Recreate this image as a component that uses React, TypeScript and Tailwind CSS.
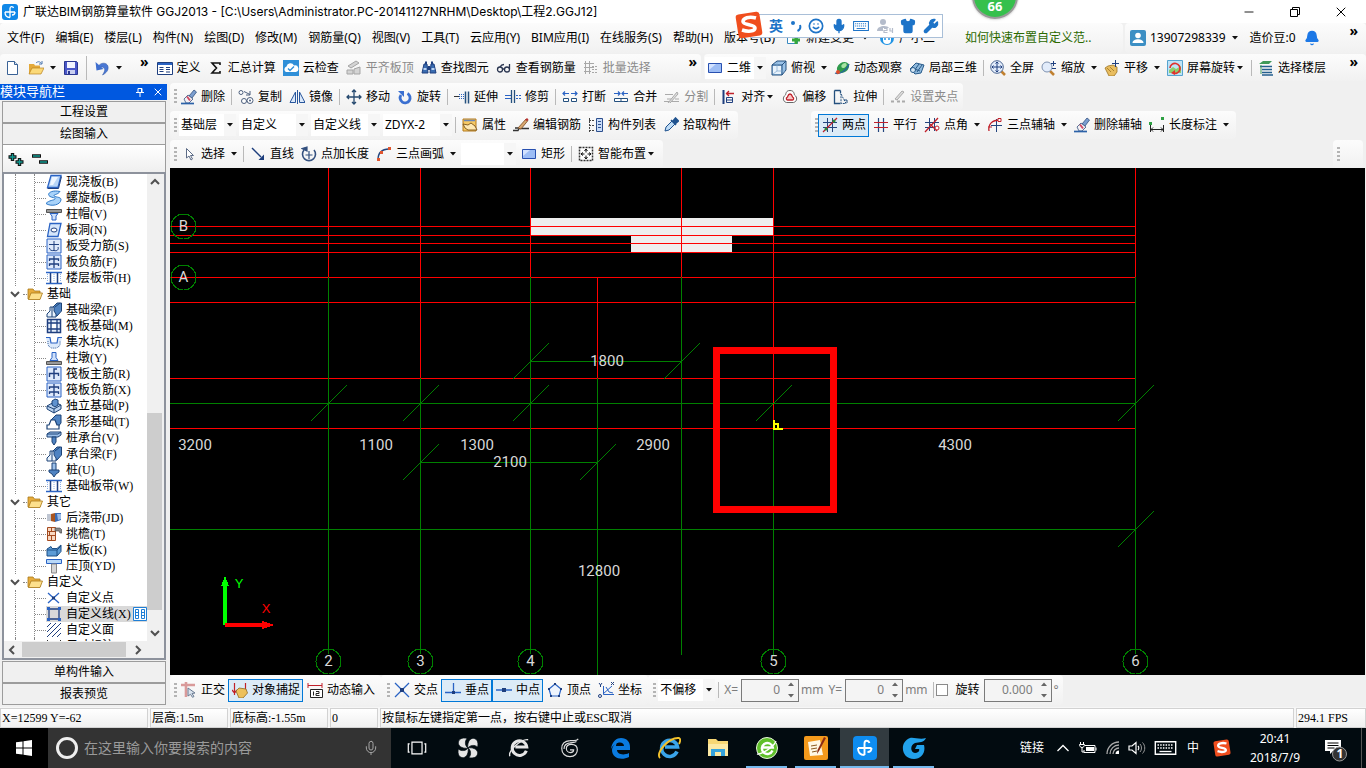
import { Fragment, useState } from 'react';
import type { ReactNode } from 'react';
import { Bell, Mic, Minus, Shirt, Smile, Wrench, X } from 'lucide-react';

const NAVY = '#1f3f7f';
const BLUE = '#2a63c4';
const RED = '#c0202a';

// 16x16 toolbar and tree glyphs
const icons: Record<string, ReactNode> = {
  app: (
    <>
      <rect width="16" height="16" rx="3" fill="#1088e8" />
      <path d="M3 8h10M8 13.500c-3.500 0-5-2-5-5.500M8 13.500V4.500c0-2.500 3-2.500 3.500-.5M13 8c0 2-1.500 3-3 3" fill="none" stroke="#fff" strokeWidth="1.300" />
    </>
  ),
  newFile: (
    <>
      <path d="M2.500 1.500h7l3 3v10h-10z" fill="#fff" stroke="#3a6296" />
      <path d="M9.500 1.500v3h3" fill="#dbe6f4" stroke="#3a6296" />
    </>
  ),
  open: (
    <>
      <path d="M1 4h5l1 1.500h5V14H1z" fill="#e3a93a" />
      <path d="M4 8h12l-3 6H1z" fill="#fbd978" stroke="#b9811c" strokeWidth=".7" />
      <path d="M8 3c2-2 4-1.500 5.500.5M14 1v3h-3" fill="none" stroke="#4a77b0" />
    </>
  ),
  save: (
    <>
      <path d="M1.500 1.500h12l1 1v12h-13z" fill="#4a57c8" stroke="#2b3790" />
      <path d="M4 2h8v6H4z" fill="#f2f4ff" />
      <path d="M4 10h8v4H4z" fill="#c9cff0" />
      <path d="M5 11h2v3H5z" fill="#2b3790" />
    </>
  ),
  undo: (
    <>
      <path d="M4 7c2-5 9-5 10-.5.7 3.500-1.500 6.500-5.500 8.500 2-3 3-5.500 1.500-7C8.500 6.500 7 7 6 8z" fill="#4a78d4" stroke="#274f9e" strokeWidth=".5" />
      <path d="M1.500 2l1 8.500 7-1.500z" fill="#3f6fcf" />
    </>
  ),
  define: (
    <>
      <path d="M.5 2.500h15v12H.5z" fill="#fff" stroke={NAVY} />
      <path d="M1 3h14v2H1z" fill={BLUE} />
      <path d="M2.500 7.500h4M2.500 9.500h4M2.500 11.500h4M9 7.500h4M9 9.500h4M9 12h4" stroke={NAVY} />
    </>
  ),
  sum: <path d="M12 5V3H4l4.500 5L4 13h8v-2" fill="none" stroke="#111" strokeWidth="1.600" />,
  cloud: (
    <>
      <rect width="16" height="16" fill="#2f8fd8" />
      <path d="M3 12a3 3 0 0 1 .5-5.500A4 4 0 0 1 11 5.500a3.300 3.300 0 0 1 2 6.500z" fill="#fff" />
      <path d="M5 8.500l2 2 4-4" fill="none" stroke="#2f8fd8" strokeWidth="1.400" />
    </>
  ),
  flatTop: (
    <g fill="#d4d4d4" stroke="#a5a5a5">
      <path d="M2 6l8-5 3 2-8 5z" />
      <path d="M1 10h6v4H1zM8 9l6-2v7H8z" />
    </g>
  ),
  binoculars: (
    <>
      <path d="M3 4h3l1 9H1zM10 4h3l2 9H9z" fill="#3a6cb0" stroke={NAVY} />
      <path d="M4 1.500h2V4H4zM10 1.500h2V4h-2zM7 6h2v4H7z" fill={NAVY} />
      <path d="M2.500 9h3M10.500 9h3" stroke="#bcd4f4" strokeWidth="2" />
    </>
  ),
  glasses: (
    <g fill="none" stroke="#2a3550" strokeWidth="1.300">
      <circle cx="4" cy="9.500" r="2.500" />
      <circle cx="11" cy="9.500" r="2.500" />
      <path d="M6.500 9h2M13.500 9V4M4 7c1-2 2-2.500 4-2.500" />
    </g>
  ),
  batch: (
    <g fill="none" stroke="#a8a8a8">
      <path d="M1 3.500h10M1 7.500h10M1 11.500h7M2.500 1v13M6.500 1v13" />
      <path d="M9 6.500h6M9 9.500h6M9 12.500h6" strokeDasharray="2 1" />
    </g>
  ),
  rect: (
    <>
      <path d="M1.500 3.500h13v9h-13z" fill="#9dbdf5" stroke="#2850b0" />
      <path d="M2 4h7l-7 6z" fill="#d3e2ff" />
    </>
  ),
  cube: (
    <>
      <path d="M1 5l5-4h9v9l-4 5H1z" fill="#9cc3e8" stroke="#24507e" />
      <path d="M1 5h10v10M11 5l4-4" fill="none" stroke="#24507e" />
      <path d="M2 6h8v8H2z" fill="#e9f3fc" />
      <path d="M6 2v9M6 11l-4 3M6 11h8" stroke="#7ea6cc" strokeWidth=".7" />
    </>
  ),
  orbit: (
    <>
      <ellipse cx="9" cy="7.500" rx="6.500" ry="5" fill="#2f9a4c" transform="rotate(-35 9 7.500)" />
      <ellipse cx="10" cy="5.500" rx="3" ry="2" fill="#a8e4a4" transform="rotate(-35 10 5.500)" />
      <path d="M1 13c5 2 12-3 14-9" fill="none" stroke="#26639c" strokeWidth="1.300" />
      <circle cx="4" cy="12" r="2" fill="#e04b2a" />
    </>
  ),
  local3d: (
    <>
      <path d="M1 9l6-6 8 2-3 8-6 1z" fill="#8fb9dc" stroke="#275a8a" />
      <path d="M5 11l5-7M8 12l5-7M3 8l8 3" stroke="#275a8a" />
      <circle cx="4" cy="10" r="2.500" fill="#d6e8f6" stroke="#275a8a" />
    </>
  ),
  fullScreen: (
    <>
      <path d="M11 11l4 4" stroke="#c08030" strokeWidth="2.500" />
      <circle cx="7" cy="7" r="6.300" fill="#e2ecfb" stroke="#4b6590" />
      <path d="M7 2v10M2 7h10M5.500 3.500L7 2l1.500 1.500M5.500 10.500L7 12l1.500-1.500M3.500 5.500L2 7l1.500 1.500M10.500 5.500L12 7l-1.500 1.500" fill="none" stroke={NAVY} />
    </>
  ),
  zoom: (
    <>
      <path d="M9 11l4 4" stroke="#c08030" strokeWidth="2.500" />
      <circle cx="6" cy="7" r="5" fill="#e2ecfb" stroke="#7f92b0" />
      <path d="M12.500 1v5M10 3.500h5M11 8.500h4" stroke={NAVY} />
    </>
  ),
  pan: (
    <>
      <path d="M1 8l3-2 5-1 4 2v5l-3 4H5z" fill="#e9bd5f" stroke="#9c7424" strokeWidth=".8" />
      <path d="M3 8l4 4M6 7l4 4" stroke="#9c7424" strokeWidth=".8" />
      <path d="M11.500 0v7M8 3.500h7" stroke={NAVY} />
    </>
  ),
  rotateView: (
    <>
      <path d="M.5.5h15v15H.5z" fill="#bfe3f7" stroke="#56a3cf" />
      <path d="M2 10l4-3 3 2 5-3v7H2z" fill="#8ccf6c" />
      <path d="M3 8a5 5 0 1 1 3 5" fill="none" stroke="#e0322e" strokeWidth="1.700" />
      <path d="M8 10v5l-4-2z" fill="#e0322e" />
    </>
  ),
  floors: (
    <>
      <path d="M1 4l4-3h9l-3 3z" fill="#3f9a58" />
      <path d="M2 6.500h12M4 9.500h10M4 12.500h10M4 15h11" stroke="#245f8e" strokeWidth="1.500" />
      <path d="M3 5v9" stroke="#3f9a58" />
    </>
  ),
  erase: (
    <>
      <path d="M8 7l5-6 2.500 2L11 9z" fill="#7b9ed0" stroke="#33507f" strokeWidth=".8" />
      <path d="M3 10l4-4 5 4-4 4H5z" fill="#f4f1f4" stroke="#33507f" strokeWidth=".8" />
      <path d="M6 7.500l3 4" stroke="#d04a62" strokeWidth="1.800" />
      <path d="M0 14.500h13" stroke="#2c62a8" strokeWidth="1.700" />
    </>
  ),
  copy: (
    <>
      <g fill="#fff" stroke="#4c5f7d">
        <circle cx="3" cy="3.500" r="2" />
        <circle cx="6" cy="12" r="2.500" />
        <circle cx="12" cy="11.500" r="3" />
      </g>
      <path d="M6 2.500l6 3M12 2v4H8" fill="none" stroke="#4c5f7d" />
      <circle cx="12" cy="11.500" r="1" fill="#4c5f7d" />
    </>
  ),
  mirror: <path d="M6.500 3v10.500H1zM8.500 1v14M10.500 3v10.500H16z" fill="#dce9fa" stroke="#28569c" />,
  move: <path d="M8 1v14M1 8h14M6 3l2-2 2 2M6 13l2 2 2-2M3 6L1 8l2 2M13 6l2 2-2 2" fill="none" stroke="#26496f" strokeWidth="1.300" />,
  rotate: (
    <>
      <path d="M4 6a5 5 0 1 0 6.500-1.500" fill="none" stroke="#3a6fd0" strokeWidth="2.800" />
      <path d="M1 2h6v6z" fill="#3a6fd0" />
    </>
  ),
  extend: (
    <>
      <path d="M0 7.500h5" stroke="#333" />
      <path d="M5 7.500h6M5 9.500h6M5 5.500h6" stroke={BLUE} strokeDasharray="1 1" />
      <path d="M11.500 2.500v12M14.500 2.500v12" stroke="#24507e" strokeWidth="1.500" />
    </>
  ),
  trim: (
    <>
      <path d="M0 6.500h6M0 9.500h6" stroke={BLUE} />
      <path d="M6.500 1v13M9.500 1v13" stroke="#24507e" strokeWidth="1.300" />
      <path d="M11 6.500h5M11 9.500h5" stroke={BLUE} strokeDasharray="2 1" />
    </>
  ),
  breakLine: (
    <>
      <path d="M1 4.500h6M9 4.500h6M3 2.500l-2 2 2 2M13 2.500l2 2-2 2" fill="none" stroke={BLUE} strokeWidth="1.200" />
      <path d="M1.500 9.500h5v3h-5zM9.500 9.500h5v3h-5z" fill="#fff" stroke="#24507e" />
    </>
  ),
  merge: (
    <>
      <path d="M1 4.500h6M9 4.500h6M5 2.500l2 2-2 2M11 2.500l-2 2 2 2" fill="none" stroke={BLUE} strokeWidth="1.200" />
      <path d="M1.500 9.500h13v3h-13zM8 9.500v3" fill="#fff" stroke="#24507e" />
    </>
  ),
  split: (
    <g fill="none" stroke="#aaa">
      <path d="M1 5.500h8M0 12.500h15M3 10h5M11 10h4" />
      <path d="M4 14L13 3l1 2-8 9" fill="#ddd" />
    </g>
  ),
  align: (
    <>
      <path d="M2.500 1v14" stroke={NAVY} strokeWidth="2" />
      <path d="M5.500 8.500h6v5h-6zM5 11h7" fill="none" stroke={NAVY} />
      <path d="M5 4.500h8M8 2L5.500 4.500 8 7" fill="none" stroke={RED} strokeWidth="1.300" />
    </>
  ),
  offset: (
    <>
      <path d="M8 1.500c4 0 4 3 4.500 4.500 3 2 3 6.500-1 7.500h-7c-4-1-4-5.500-1-7.500C4 4.500 4 1.500 8 1.500z" fill="#fff" stroke="#666" />
      <path d="M8 5c2 0 2 2 2.500 3 2 1 1 3 0 3h-5c-1 0-2-2 0-3C6 7 6 5 8 5z" fill="#f7c8c8" stroke={RED} strokeWidth="1.300" />
    </>
  ),
  stretch: (
    <>
      <path d="M1.500 1.500h6M1.500 1.500v13h6M7.500 1.500v3" fill="none" stroke="#24507e" strokeWidth="1.300" />
      <path d="M8 5l5 9.500H8z" fill="none" stroke="#24507e" strokeDasharray="2 1" />
      <path d="M11 11h3v3" fill="none" stroke="#24507e" />
    </>
  ),
  grip: (
    <g stroke="#aaa" fill="none">
      <path d="M1 12.500h3M7 12.500h3M12 12.500h3" strokeWidth="2" />
      <path d="M5 10l7-8 2 1-7 8z" fill="#ddd" />
    </g>
  ),
  property: (
    <>
      <path d="M1 2h13v12H1z" fill="#f7c964" stroke="#b47a1f" />
      <path d="M2 3.500h11" stroke="#6b87b7" strokeWidth="1.500" />
      <path d="M1 7l5 1 3-2 4 3 2 4H6L3 11z" fill="#ffe9b4" stroke="#7c5418" strokeWidth=".9" />
    </>
  ),
  editBar: (
    <>
      <path d="M0 13.500h5l1-2h10M2 11h3" stroke="#333" fill="none" strokeWidth="1.400" />
      <path d="M5 11l8-9 2 1.500L8 12z" fill="#d8a870" stroke="#7b4a20" strokeWidth=".8" />
      <path d="M12 3l2-2 1.500 1.500L14 4z" fill="#b83030" />
    </>
  ),
  list: (
    <>
      <path d="M1 3.500h5M1 8.500h5M1 13.500h5M1.500 1v14" stroke="#444" strokeDasharray="2 1" />
      <path d="M8.500 1.500h6v13h-6z" fill="#c9dcf8" stroke="#2c4f8d" />
      <path d="M10 4.500h3M10 7.500h3M10 10.500h3" stroke="#2c4f8d" />
    </>
  ),
  picker: (
    <>
      <path d="M2 14l1-4 6-6 3 3-6 6z" fill="#bfdcf6" stroke="#20538f" />
      <path d="M8 3l5 5M10 4l2.500-3 3 3L13 6z" fill="#20538f" stroke="#20538f" strokeWidth="1.500" />
    </>
  ),
  twoPoint: (
    <>
      <path d="M5.500 1v14M10.500 1v14M1 5.500h14M1 10.500h14" stroke="#24457e" />
      <path d="M1 15L15 1" stroke={RED} strokeWidth="1.300" />
      <circle cx="4" cy="12" r="1.500" fill="#2d8c3a" />
      <circle cx="12" cy="4" r="1.500" fill="#2d8c3a" />
    </>
  ),
  parallel: (
    <>
      <path d="M5.500 1v14M10.500 1v14" stroke="#24457e" strokeWidth="1.200" />
      <path d="M1 5.500h14M1 10.500h14" stroke={RED} strokeWidth="1.200" />
    </>
  ),
  pointAngle: (
    <>
      <path d="M5.500 1v13M10.500 1v13M1 5.500h14M1 10.500h10" stroke="#24457e" />
      <path d="M1 15L14 1M6 7l7 7" stroke={RED} strokeWidth="1.300" />
      <circle cx="13" cy="11" r="2" fill="#fff" stroke={RED} />
    </>
  ),
  arcAxis: (
    <>
      <path d="M9.500 2v13M4 8.500h11" stroke="#24457e" />
      <path d="M2 14C1 7 5 3 13 3" fill="none" stroke={RED} strokeWidth="1.300" />
      <path d="M1 10h4M11 1.500h3v3h-3z" stroke={RED} fill="#fff" />
    </>
  ),
  dimension: (
    <>
      <path d="M1.500 8v7M14.500 8v7M1.500 12.500h13M4 10.500l-2 2 2 2M12 10.500l2 2-2 2" fill="none" stroke="#222" />
      <path d="M0 5h3v3H0zM12 0h3v3h-3z" fill="#2ea043" />
    </>
  ),
  cursor: <path d="M5.500 2.500v9.500l2.500-2 2 4 1.500-1-2-3.500h3z" fill="#fff" stroke="#5c6b86" />,
  line: (
    <>
      <path d="M2 2l9 9" stroke="#1c3d7c" strokeWidth="1.400" />
      <path d="M14 14H8.500L14 8.500z" fill="#1c3d7c" />
    </>
  ),
  addLength: (
    <>
      <path d="M3 4a6.500 6.500 0 1 0 10 0" fill="none" stroke="#33507f" strokeWidth="1.600" />
      <path d="M1 2.500l5-1.500v4zM8 5v8M4.500 9h7" stroke="#33507f" strokeWidth="1.200" fill="#33507f" />
    </>
  ),
  arc: (
    <>
      <path d="M2 14C2 7 6 3 13 3" fill="none" stroke="#24457e" strokeWidth="1.400" />
      <path d="M1 12h3v3H1zM4 5h3v3H4zM12 1h3v3h-3z" fill="#e0562f" />
    </>
  ),
  smart: (
    <>
      <path d="M1.500 1.500h13v13h-13z" fill="#fff" stroke="#333" strokeDasharray="2 1" strokeWidth="1.500" />
      <path d="M8 3v3.500M8 9.500V13M3 8h3.500M9.500 8H13M6.500 5L8 3l1.500 2M6.500 11L8 13l1.500-2M5 6.500L3 8l2 1.500M11 6.500L13 8l-2 1.500" fill="none" stroke="#111" />
    </>
  ),
  ortho: (
    <>
      <path d="M0 3h14M5 0v15" stroke="#d99a9a" strokeWidth="2.600" />
      <path d="M7 6l7 5-3 .5 2 3-1.500.8-2-3L7 14z" fill="#dbe4ee" stroke="#6a7b93" />
    </>
  ),
  snap: (
    <>
      <path d="M2.500 1v12M0 8l2.500 3L5 8M13.500 1v8" stroke={RED} strokeWidth="1.200" fill="none" />
      <path d="M4 9l3-3 7 1 1.500 4-4.500 5H7z" fill="#edc15c" stroke="#8f6b22" strokeWidth=".8" />
    </>
  ),
  dynInput: (
    <>
      <path d="M1 1v5M15 1v5M1 3.500h14" stroke={RED} />
      <path d="M3.500 7.500h12v8h-12z" fill="#fff" stroke="#222" />
      <path d="M6.500 9.500v4M9 9.500h3v2H9v2h3.500" stroke="#222" fill="none" />
    </>
  ),
  cross: (
    <>
      <path d="M1 1l14 14M15 1L1 15" stroke={BLUE} strokeWidth="1.300" />
      <path d="M6 6h4v4H6z" fill={NAVY} />
    </>
  ),
  perp: (
    <>
      <path d="M0 10.500h16M8.500 1v10" stroke={BLUE} strokeWidth="1.300" />
      <path d="M7 9h3v3H7z" fill={NAVY} />
    </>
  ),
  middle: (
    <>
      <path d="M0 8h16" stroke={BLUE} strokeWidth="1.500" />
      <path d="M6 6h4v4H6z" fill={NAVY} />
    </>
  ),
  vertex: (
    <>
      <path d="M8 2l6 5-2 7H4L2 7z" fill="#eef4fd" stroke={BLUE} strokeWidth="1.200" />
      <path d="M7 1h2v2H7zM1 6h2v2H1zM13 6h2v2h-2zM3 13h2v2H3zM11 13h2v2h-2z" fill={NAVY} />
    </>
  ),
  coord: (
    <g fill="none" stroke={BLUE}>
      <path d="M5.500 4v8.500H16M5 12L14 4M8 5l3 5 4 1" />
      <path d="M1 1l1.500 2L4 1M2.500 3v2M13 0l3 3M16 0l-3 3" stroke={NAVY} />
      <circle cx="2" cy="14" r="1.500" stroke={NAVY} />
    </g>
  ),
  folder: (
    <>
      <path d="M1 3h5l1.500 2H13v8H1z" fill="#e7ac3c" stroke="#a97a1a" strokeWidth=".8" />
      <path d="M4 7h11.500L13 13.500H1.500z" fill="#fde08c" stroke="#a97a1a" strokeWidth=".8" />
    </>
  ),
  slab: (
    <>
      <path d="M5 1.500h10l-3 12H1.500z" fill="#b8d5f7" stroke={BLUE} strokeWidth="1.300" />
      <path d="M6 3h6L7 11H4z" fill="#eef6ff" />
      <path d="M1.500 14.500h11l3-12" fill="none" stroke={NAVY} />
    </>
  ),
  spiral: <path d="M14 1.500C5-.5 0 4 4 6.500c3 1.500 6 1 5 2.500s-6 1-9 4.500c5 3.500 15 1.500 15-4 0-3-7-2-7-4 0-1 4-1 6-4z" fill="#a8d3fa" stroke="#2e79c8" />,
  capital: (
    <>
      <path d="M.5 3.500h15v3H.5z" fill="#999" stroke="#555" />
      <path d="M4 7.500h8l-2 2.500v4H6v-4z" fill="#cfe0fa" stroke={BLUE} />
    </>
  ),
  hole: (
    <>
      <path d="M4 1.500h11l-3 13H1.500z" fill="#d5e6fb" stroke={BLUE} strokeWidth="1.300" />
      <ellipse cx="8" cy="8" rx="3" ry="2" fill="#fff" stroke={NAVY} />
    </>
  ),
  stressBar: (
    <>
      <path d="M1 1h14v14H1z" fill="#dfeafc" stroke={BLUE} />
      <path d="M3 6.500h10M8 3v9.500c3 1 5-1 4-3.500M3.500 10c0 2 2 3 4.500 2.500" fill="none" stroke={NAVY} />
    </>
  ),
  negBar: (
    <>
      <path d="M1 1h14v14H1z" fill="#dfeafc" stroke={BLUE} />
      <path d="M8 2v12M3.500 7V5h9v2M3.500 12v-2h9v2" fill="none" stroke={NAVY} strokeWidth="1.300" />
    </>
  ),
  band: (
    <>
      <path d="M0 2.500h16M0 13.500h16" stroke={BLUE} strokeWidth="1.600" />
      <path d="M4.500 3v10M11.500 3v10" stroke={NAVY} strokeWidth="1.500" />
      <path d="M1.500 4v8M8 4v8M14.500 4v8" stroke="#8fb2e8" strokeDasharray="1 1" />
    </>
  ),
  beam: (
    <>
      <path d="M6 6l5-5h4.500v8L11 14H6z" fill="#4f83c2" stroke="#1d4376" />
      <path d="M1 15v-3l3-3V5h4v4l2 3v3z" fill="#e8f2fd" stroke="#1d4376" />
      <path d="M6 5v10M9 5l5-4" stroke="#1d4376" />
    </>
  ),
  raft: (
    <>
      <path d="M1.500 1.500h13v13h-13z" fill="#e5effc" stroke={NAVY} strokeWidth="1.500" />
      <path d="M5 1v14M11 1v14M1 5h14M1 11h14" stroke={NAVY} strokeWidth="1.300" />
      <path d="M6 6h4v4H6z" fill="#fff" />
    </>
  ),
  sump: (
    <>
      <path d="M0 3h4l1 6h6l1-6h4l-2 10-6 2-6-2z" fill="#dbe9fb" stroke="none" />
      <path d="M0 3.500h4l1 5.500h6l1-5.500h4" fill="none" stroke={BLUE} strokeWidth="1.200" />
      <path d="M2 7v4l3 3h6l3-3V7" fill="none" stroke="#47689c" strokeDasharray="1 1" />
    </>
  ),
  pier: (
    <>
      <path d="M.5 11.500h15v3H.5z" fill="#999" stroke="#555" />
      <path d="M4 10.500h8l-2-3v-5H6v5z" fill="#cfe0fa" stroke={BLUE} />
    </>
  ),
  mainBar: (
    <>
      <path d="M1 1h14v14H1z" fill="#dfeafc" stroke={BLUE} />
      <path d="M8 13V3h3M3.500 11V7.500h9V10" fill="none" stroke={NAVY} strokeWidth="1.400" />
    </>
  ),
  footing: (
    <>
      <path d="M1 8l7-4 7 3v4l-7 4-7-4z" fill="#b9d2f0" stroke="#1d4376" />
      <path d="M1 8l7 3 7-4M8 11v4" fill="none" stroke="#1d4376" />
      <path d="M6 3l3-2 3 1v5L9 9 6 7z" fill="#5f92cf" stroke="#1d4376" />
    </>
  ),
  strip: (
    <>
      <path d="M5 6l5-5h5v8l-4 5" fill="#4f83c2" stroke="#1d4376" />
      <path d="M1 15v-4h2l2-5h4l2 5h2v4z" fill="#fff" stroke="#1d4376" strokeWidth="1.200" />
    </>
  ),
  pileCap: (
    <>
      <path d="M1 4l3-2h11v3l-3 2H1z" fill="#9cc0ea" stroke="#1d4376" />
      <path d="M1 4h11l3-2" fill="none" stroke="#1d4376" />
      <path d="M6 7h4v5l-2 3-2-3z" fill="#4f83c2" stroke="#1d4376" />
    </>
  ),
  pile: (
    <>
      <path d="M6 1h4v8H6z" fill="#9cc0ea" stroke="#1d4376" />
      <path d="M3 8h10v2l-3 2-2 3-2-3-3-2z" fill="#4f83c2" stroke="#1d4376" />
    </>
  ),
  postCast: (
    <>
      <path d="M1 4h5v7H1z" fill="#bfc6d2" />
      <path d="M5 4l4-1v9l-4-1z" fill="#a9551f" />
      <path d="M9 3h6v7l-6 2z" fill="#3a6bb4" />
      <path d="M11 4h4v5l-3 1z" fill="#9bbce8" />
    </>
  ),
  eave: (
    <>
      <path d="M1.500 1.500h8v13h-8z" fill="#f9d9c2" stroke="#a44b20" />
      <path d="M1 5.500h8M1 9.500h8M5.500 1v4M3.500 5v4M5.500 10v5" stroke="#a44b20" />
      <path d="M9 2h5l2 2v3h-2l-1-2H9z" fill="#888" stroke="#444" strokeWidth=".6" />
    </>
  ),
  railing: (
    <>
      <path d="M1 7l4-2.500 1 2h5l4-3.500v6.500L11 14H1z" fill="#5d9cd6" stroke="#1d4f86" />
      <path d="M1 8h10v6M11 8l4-4" fill="none" stroke="#1d4f86" />
    </>
  ),
  coping: (
    <>
      <path d="M.5 1.500h15v4H.5z" fill="#b8d8f8" stroke={BLUE} />
      <path d="M5.500 6h5v9h-5z" fill="#d6d6d6" stroke="#888" />
    </>
  ),
  customPoint: (
    <>
      <path d="M2 3l11 10M13 3L2 13" stroke={BLUE} strokeWidth="1.300" />
      <path d="M6 6.500h3v3H6z" fill={NAVY} />
    </>
  ),
  customLine: (
    <>
      <path d="M3 3h10v10H3z" fill="none" stroke={NAVY} strokeWidth="1.300" />
      <path d="M1 1h3v3H1zM12 1h3v3h-3zM1 12h3v3H1zM12 12h3v3h-3z" fill={BLUE} />
    </>
  ),
  customFace: <path d="M1 5l4-4M1 10l9-9M1 15L15 1M6 15l9-9M11 15l4-4" stroke={NAVY} />,
  dimTree: <path d="M1.500 2v12M14.500 2v12M1 4.500h14" stroke="#333" />,
};

function Icon({ name }: { name: string }) {
  return (
    <svg viewBox="0 0 16 16" className="w-4 h-4 shrink-0" aria-hidden="true">
      {icons[name]}
    </svg>
  );
}

function Caret() {
  return (
    <svg viewBox="0 0 6 4" className="w-1.5 h-1 shrink-0" aria-hidden="true">
      <path d="M0 0h6L3 3.500z" fill="#111" />
    </svg>
  );
}

function Sep() {
  return <span className="w-px h-4 ml-[3px] mr-0.5 bg-[#b9b9b9] shrink-0" />;
}

function Grip() {
  return <span className="w-[3px] h-[15px] ml-1 shrink-0 bg-[repeating-linear-gradient(#b4b4b4_0_2px,transparent_2px_4px)]" />;
}

function More() {
  return <span className="text-sm leading-3 font-bold self-start mt-0.5">»</span>;
}

type ToolProps = { icon: string; label: string; menu?: 'near' | 'far'; active?: boolean; disabled?: boolean };

function Tool({ icon, label, menu, active, disabled }: ToolProps) {
  return (
    <button
      type="button"
      disabled={disabled}
      className={`flex items-center gap-1 h-[23px] pl-[3px] pr-0.5 border shrink-0 whitespace-nowrap ${
        active ? 'border-[#0078d7] bg-[#dcebf7]' : 'border-transparent'
      } ${disabled ? 'text-[#8b8b8b]' : ''}`}
    >
      <Icon name={icon} />
      {label}
      {menu && (
        <span className={menu === 'far' ? 'pl-0.5' : '-ml-0.5 pr-0.5'}>
          <Caret />
        </span>
      )}
    </button>
  );
}

function Combo({ label, value, className }: { label: string; value: string; className: string }) {
  return (
    <label className={`relative flex items-center h-[22px] bg-white shrink-0 ${className}`}>
      <select aria-label={label} className="appearance-none w-full h-full pl-0.5 outline-none bg-transparent">
        <option>{value}</option>
      </select>
      <span className="absolute right-0 inset-y-0 w-3 flex items-center justify-center bg-[#f6f6f6] pointer-events-none">
        <Caret />
      </span>
    </label>
  );
}

function Bar({ children, className = '' }: { children?: ReactNode; className?: string }) {
  return (
    <div className={`flex items-center h-full rounded bg-linear-to-b from-[#fcfcfc] to-[#f1f1f1] shrink-0 ${className}`}>{children}</div>
  );
}

function Spin({ id, value, className }: { id: string; value: string; className: string }) {
  return (
    <span className={`flex items-center h-[23px] border border-[#7a7a7a] bg-[#f4f4f4] text-[#7d7d7d] shrink-0 ${className}`}>
      <input id={id} defaultValue={value} className="w-full min-w-0 text-right outline-none bg-transparent pr-2" />
      <svg viewBox="0 0 6 16" className="w-1.5 h-4 mr-1 shrink-0" aria-hidden="true">
        <path d="M0 4l3-3.500L6 4zM0 12h6l-3 3.500z" fill="#666" />
      </svg>
    </span>
  );
}

const menus = [
  '文件(F)', '编辑(E)', '楼层(L)', '构件(N)', '绘图(D)', '修改(M)', '钢筋量(Q)', '视图(V)', '工具(T)',
  '云应用(Y)', 'BIM应用(I)', '在线服务(S)', '帮助(H)', '版本号(B)',
];

const tree = [
  {
    name: '',
    items: [
      ['slab', '现浇板(B)'], ['spiral', '螺旋板(B)'], ['capital', '柱帽(V)'], ['hole', '板洞(N)'],
      ['stressBar', '板受力筋(S)'], ['negBar', '板负筋(F)'], ['band', '楼层板带(H)'],
    ],
  },
  {
    name: '基础',
    items: [
      ['beam', '基础梁(F)'], ['raft', '筏板基础(M)'], ['sump', '集水坑(K)'], ['pier', '柱墩(Y)'],
      ['mainBar', '筏板主筋(R)'], ['negBar', '筏板负筋(X)'], ['footing', '独立基础(P)'], ['strip', '条形基础(T)'],
      ['pileCap', '桩承台(V)'], ['beam', '承台梁(F)'], ['pile', '桩(U)'], ['band', '基础板带(W)'],
    ],
  },
  {
    name: '其它',
    items: [['postCast', '后浇带(JD)'], ['eave', '挑檐(T)'], ['railing', '栏板(K)'], ['coping', '压顶(YD)']],
  },
  {
    name: '自定义',
    items: [['customPoint', '自定义点'], ['customLine', '自定义线(X)'], ['customFace', '自定义面'], ['dimTree', '尺寸标注(W)']],
  },
];

function Chevron({ d }: { d: string }) {
  return (
    <svg viewBox="0 0 16 16" className="w-4 h-4 shrink-0" aria-hidden="true">
      <path d={d} fill="none" stroke="#505050" strokeWidth="2" />
    </svg>
  );
}

function TreeView() {
  const [selected, setSelected] = useState('自定义线(X)');

  return (
    <div className="flex-1 min-h-0 ml-0.5 mr-1 border-2 border-[#8d929c] bg-[#f0f0f0] flex flex-col">
      <div className="flex flex-1 min-h-0">
        <ul className="flex-1 min-w-0 overflow-hidden bg-white">
          {tree.map((group) => (
            <Fragment key={group.name}>
              {group.name && (
                <li className="flex items-center h-4 pl-[3px]">
                  <Chevron d="M4 6l4 4 4-4" />
                  <span className="w-1 border-t border-dotted border-[#888]" />
                  <Icon name="folder" />
                  <span className="pl-1">{group.name}</span>
                </li>
              )}
              {group.items.map(([icon, label]) => (
                <li key={label} className="flex items-center h-4 pl-[11px]">
                  <span className="w-[19px] h-4 border-l border-dotted border-[#888] shrink-0" />
                  <span className="w-3 h-4 border-l border-dotted border-[#888] shrink-0 flex items-center">
                    <span className="w-full border-t border-dotted border-[#888]" />
                  </span>
                  <button
                    type="button"
                    onClick={() => setSelected(label)}
                    className={`flex items-center gap-1 h-4 whitespace-nowrap ${selected === label ? 'bg-[#d9d9d9]' : ''}`}
                  >
                    <Icon name={icon} />
                    {label}
                    {selected === label && (
                      <svg viewBox="0 0 14 16" className="w-3.5 h-4 -ml-0.5 shrink-0" aria-hidden="true">
                        <path d="M.5 1.500h13v13H.5z" fill="#fff" stroke="#1f7fd6" />
                        <path d="M2.500 3.500h3v9h-3zM8.500 3.500h3v9h-3zM2.500 6.500h3M2.500 9.500h3M8.500 6.500h3M8.500 9.500h3" fill="none" stroke="#1f7fd6" />
                      </svg>
                    )}
                  </button>
                </li>
              ))}
            </Fragment>
          ))}
        </ul>
        <div className="w-[17px] pr-0.5 shrink-0 flex flex-col items-center">
          <Chevron d="M4 10l4-4 4 4" />
          <span className="flex-[222]" />
          <span className="w-full flex-[196] bg-[#cdcdcd]" />
          <span className="flex-[15]" />
          <Chevron d="M4 6l4 4 4-4" />
        </div>
      </div>
      <div className="flex items-center h-[17px] shrink-0 pr-[18px]">
        <Chevron d="M10 4L6 8l4 4" />
        <span className="h-[15px] flex-1 ml-0.5 mr-1 bg-[#cdcdcd]" />
        <Chevron d="M6 4l4 4-4 4" />
      </div>
    </div>
  );
}

function PanelButton({ children }: { children: ReactNode }) {
  return (
    <button type="button" className="h-[22px] ml-0.5 mr-1 shrink-0 border border-[#9c9c9c] bg-[#f0f0f0] flex items-center justify-center">
      {children}
    </button>
  );
}

function NavPanel() {
  return (
    <aside className="w-[170px] shrink-0 flex flex-col pt-px pb-0.5 font-['Liberation_Serif','Noto_Sans_CJK_SC',serif]">
      <div className="flex items-center h-4 mr-[3px] mb-px bg-[#0058e0] text-white text-[13px] leading-4">
        <span className="flex-1">模块导航栏</span>
        <button type="button" aria-label="固定" className="w-[18px] flex justify-center">
          <svg viewBox="0 0 10 10" className="w-2.5 h-2.5">
            <path d="M3 1.500h4v4H3zM1 5.500h8M5 6v4M6.500 2v3" fill="none" stroke="#fff" />
          </svg>
        </button>
        <button type="button" aria-label="关闭" className="w-[18px] flex justify-center">
          <X className="w-3 h-3" strokeWidth={2} />
        </button>
      </div>
      <PanelButton>工程设置</PanelButton>
      <PanelButton>绘图输入</PanelButton>
      <div className="h-[27px] ml-0.5 mr-1 shrink-0 border-x border-[#9c9c9c] bg-linear-to-b from-white to-[#efefef] flex items-center pl-1 gap-1.5">
        <svg viewBox="0 0 18 16" className="w-[18px] h-4" aria-label="展开">
          <path d="M5.500 2v8M1.500 6h8M12.500 7v8M8.500 11h8" stroke="#111" strokeWidth="3.400" />
          <path d="M5.500 3v6M2.500 6h6M12.500 8v6M9.500 11h6" stroke="#129a92" strokeWidth="1.400" />
        </svg>
        <svg viewBox="0 0 18 16" className="w-[18px] h-4" aria-label="折叠">
          <path d="M1 5h9M8 11h9" stroke="#111" strokeWidth="3.400" />
          <path d="M2 5h7M9 11h7" stroke="#129a92" strokeWidth="1.400" />
        </svg>
      </div>
      <TreeView />
      <div className="h-px shrink-0" />
      <PanelButton>单构件输入</PanelButton>
      <PanelButton>报表预览</PanelButton>
    </aside>
  );
}

const rowLines = [226, 235, 243, 252, 277, 302, 378, 428];
// x, top of the red part, where red turns green, bottom
const columnLines = [
  [328, 168, 277, 654], [420, 168, 378, 654], [530, 168, 277, 654], [597, 277, 378, 675],
  [681, 168, 277, 655], [773, 168, 428, 655], [1135, 168, 277, 654],
];
const ticks = [
  [530, 361], [681, 361], [328, 403], [420, 403], [530, 403], [773, 403], [1135, 403], [1135, 529], [420, 462], [597, 462],
];
const bubbles: [number, number, string][] = [
  [183, 226, 'B'], [183, 277, 'A'], [328, 661, '2'], [420, 661, '3'], [530, 661, '4'], [773, 661, '5'], [1135, 661, '6'],
];
const dims: [number, number, string][] = [
  [195, 445, '3200'], [376, 445, '1100'], [477, 445, '1300'], [510, 462, '2100'], [607, 361, '1800'],
  [653, 445, '2900'], [955, 445, '4300'], [599, 571, '12800'],
];

function Drawing() {
  return (
    <div className="flex-1 min-h-0 mr-px bg-black overflow-hidden">
      <svg viewBox="170 168 1195 507" preserveAspectRatio="xMinYMin slice" className="w-full h-full" shapeRendering="crispEdges">
        <path d="M530 218h243v17H530zM631 236h101v16H631z" fill="#eee" />
        {rowLines.map((y) => (
          <path key={y} d={`M170 ${y + 0.5}H1135`} stroke="#f00" />
        ))}
        <path d="M170 403.500H1135M170 529.500H1135M530 361.500H681M420 462.500H597" stroke="#008000" />
        {columnLines.map(([x, top, turn, bottom]) => (
          <g key={x}>
            <path d={`M${x + 0.5} ${top}V${turn}`} stroke="#f00" />
            <path d={`M${x + 0.5} ${turn}V${bottom}`} stroke="#008000" />
          </g>
        ))}
        {ticks.map(([x, y]) => (
          <path key={`${x}-${y}`} d={`M${x - 17} ${y + 18}L${x + 19} ${y - 18}`} stroke="#008000" />
        ))}
        <g fontFamily="Roboto, sans-serif" fontSize="15" textAnchor="middle" fill="#d8d8d8">
          {bubbles.map(([x, y, name]) => (
            <g key={name}>
              <circle cx={x + 0.5} cy={y + 0.5} r="12.500" fill="none" stroke="#008000" />
              <text x={x + 0.5} y={y + 5}>{name}</text>
            </g>
          ))}
          {dims.map(([x, y, value]) => (
            <text key={value} x={x} y={y + 5}>{value}</text>
          ))}
        </g>
        <path d="M223 625v-39h-2l4-10 4 10h-2v39z" fill="#0f0" />
        <path d="M225 623h37v-2l12 4-12 4v-2h-37z" fill="#f00" />
        <text x="239" y="588" fontFamily="Liberation Sans, sans-serif" fontSize="13" textAnchor="middle" fill="#0f0">Y</text>
        <text x="266" y="613" fontFamily="Liberation Sans, sans-serif" fontSize="13" textAnchor="middle" fill="#f00">X</text>
        <path d="M774 420v10M773 429h10M774 424h4v5" fill="none" stroke="#ff0" strokeWidth="2" />
        <rect x="716.500" y="350.500" width="117" height="159" fill="none" stroke="#f00" strokeWidth="7" />
      </svg>
    </div>
  );
}

function SogouLogo({ className }: { className: string }) {
  return (
    <svg viewBox="0 0 28 28" className={className} aria-hidden="true">
      <rect x="2" y="2" width="24" height="24" rx="3" fill="#f04e1e" transform="rotate(-9 14 14)" />
      <path d="M21 7C14 5 8 7 8 10.500c0 4 12 2.500 12 6.500 0 3.500-7 4-13 2" fill="none" stroke="#fff" strokeWidth="3.600" />
    </svg>
  );
}

function KeyboardIcon({ className }: { className: string }) {
  return (
    <svg viewBox="0 0 22 14" className={className} aria-hidden="true">
      <path d="M.8.8h20.400v12.400H.8z" fill="none" stroke="currentColor" strokeWidth="1.400" />
      <path d="M3 4h16M3 7h16" stroke="currentColor" strokeWidth="1.500" strokeDasharray="1.500 1.200" />
      <path d="M5 10.500h12" stroke="currentColor" strokeWidth="1.300" />
    </svg>
  );
}

function ImeBar() {
  return (
    <div className="absolute left-[750px] top-3.5 w-[193px] h-6 bg-white border border-[#a9bfd8] flex items-center pl-[18px] pr-[3px] justify-between text-[#1e74c8]">
      <SogouLogo className="absolute -left-4 -top-1 w-7 h-7" />
      <span className="text-sm font-bold">英</span>
      <svg viewBox="0 0 12 12" className="w-3 h-3" aria-hidden="true">
        <circle cx="3" cy="3" r="2" fill="currentColor" />
        <path d="M10 5c1 3-.5 5-2.500 6" fill="none" stroke="currentColor" strokeWidth="2" />
      </svg>
      <Smile className="w-4 h-4" strokeWidth={2.5} />
      <Mic className="w-4 h-4" fill="currentColor" />
      <KeyboardIcon className="w-4 h-3" />
      <svg viewBox="0 0 18 16" className="w-[18px] h-4 text-[#b4bccb]" aria-hidden="true">
        <circle cx="7" cy="4" r="3" fill="currentColor" />
        <path d="M1 13c0-6 11-6 12-3H7v3z" fill="currentColor" />
        <path d="M8 10.500h3v2H8v2h3.500M14 10v3h3M16.500 10v5" fill="none" stroke="currentColor" strokeWidth="1.200" />
      </svg>
      <Shirt className="w-4 h-4" fill="currentColor" />
      <Wrench className="w-4 h-4" fill="currentColor" />
    </div>
  );
}

function TitleBar() {
  return (
    <header className="flex items-center h-[23px] shrink-0 bg-white pl-0.5 pr-0.5">
      <Icon name="app" />
      <h1 className="flex-1 pl-[5px] whitespace-nowrap font-['Inter','Noto_Sans_CJK_SC',sans-serif]">
        广联达BIM钢筋算量软件 GGJ2013 - [C:\Users\Administrator.PC-20141127NRHM\Desktop\工程2.GGJ12]
      </h1>
      <button type="button" aria-label="最小化" className="w-[46px] flex justify-center">
        <Minus className="w-3.5 h-3.5" strokeWidth={1.5} />
      </button>
      <button type="button" aria-label="还原" className="w-[46px] flex justify-center">
        <svg viewBox="0 0 10 10" className="w-2.5 h-2.5">
          <path d="M.5 2.500h7v7h-7zM2.500 2.500v-2h7v7h-2" fill="none" stroke="#000" />
        </svg>
      </button>
      <button type="button" aria-label="关闭" className="w-[46px] flex justify-center">
        <X className="w-4 h-4" strokeWidth={1.5} />
      </button>
    </header>
  );
}

function MenuBar() {
  return (
    <nav className="flex items-center h-[30px] shrink-0">
      <Bar className="pl-[7px] gap-[11px] w-[937px] overflow-hidden whitespace-nowrap">
        {menus.map((m) => (
          <button type="button" key={m}>{m}</button>
        ))}
        <button type="button" className="flex items-center gap-1">
          <svg viewBox="0 0 16 16" className="w-4 h-4" aria-hidden="true">
            <path d="M1.500 1.500h10v12h-10z" fill="#fff" stroke="#3a8ac0" />
            <path d="M10 6v8M6 10h8" stroke="#35a83a" strokeWidth="3" />
          </svg>
          新建变更
          <span className="pl-1"><Caret /></span>
        </button>
        <button type="button" className="flex items-center gap-1">
          <svg viewBox="0 0 16 16" className="w-4 h-4" aria-hidden="true">
            <circle cx="8" cy="8" r="7" fill="#1f93e4" />
            <path d="M4 7h8v3a4 4 0 0 1-8 0z" fill="#fff" />
            <path d="M6 8v2M10 8v2" stroke="#1f93e4" strokeWidth="1.500" />
          </svg>
          广小二
        </button>
      </Bar>
      <Bar className="w-[186px] pl-7 mr-0.5">
        <a href="#help" className="text-[#2c6a00] whitespace-nowrap">如何快速布置自定义范..</a>
      </Bar>
      <div className="flex flex-1 items-center h-full rounded bg-linear-to-b from-[#fcfcfc] to-[#f1f1f1] pl-[5px] pr-2 gap-1">
        <svg viewBox="0 0 16 16" className="w-4 h-4" aria-hidden="true">
          <rect width="16" height="16" rx="2" fill="#3c8fc4" />
          <circle cx="8" cy="5.500" r="2.800" fill="#fff" />
          <path d="M2.500 13c0-5 11-5 11 0z" fill="#fff" />
        </svg>
        <button type="button" className="flex items-center gap-1.5 pr-2">13907298339 <Caret /></button>
        <span className="pr-1">造价豆:0</span>
        <Bell className="w-4 h-4 text-[#1c78e6]" fill="currentColor" />
        <span className="flex-1" />
        <More />
      </div>
    </nav>
  );
}

function MainToolbar() {
  return (
    <div className="flex items-center h-[30px] pt-px pb-0.5 shrink-0">
      <Bar className="w-[701px] pl-[5px] mr-[3px]">
        <button type="button" aria-label="新建" className="mr-[7px]"><Icon name="newFile" /></button>
        <button type="button" aria-label="打开" className="flex items-center gap-1.5 mr-[7px]"><Icon name="open" /><Caret /></button>
        <button type="button" aria-label="保存"><Icon name="save" /></button>
        <span className="w-px h-6 mx-[7px] bg-[#b9b9b9]" />
        <button type="button" aria-label="撤销" className="flex items-center gap-1.5 mr-[18px]"><Icon name="undo" /><Caret /></button>
        <More />
        <span className="w-1" />
        <Tool icon="define" label="定义" />
        <Tool icon="sum" label="汇总计算" />
        <Tool icon="cloud" label="云检查" />
        <Tool icon="flatTop" label="平齐板顶" disabled />
        <Tool icon="binoculars" label="查找图元" />
        <Tool icon="glasses" label="查看钢筋量" />
        <Tool icon="batch" label="批量选择" disabled />
        <span className="flex-1" />
        <span className="pr-1 self-start flex"><More /></span>
      </Bar>
      <div className="flex flex-1 items-center h-full rounded bg-linear-to-b from-[#fcfcfc] to-[#f1f1f1] pr-2">
        <div className="flex items-center h-[22px] pl-0.5 bg-white w-[61px] mx-px">
          <Icon name="rect" />
          <Combo label="视图" value="二维" className="flex-1 ml-0.5" />
        </div>
        <Tool icon="cube" label="俯视" menu="far" />
        <Tool icon="orbit" label="动态观察" />
        <Tool icon="local3d" label="局部三维" />
        <Sep />
        <Tool icon="fullScreen" label="全屏" />
        <Tool icon="zoom" label="缩放" menu="far" />
        <Tool icon="pan" label="平移" menu="far" />
        <Tool icon="rotateView" label="屏幕旋转" menu="near" />
        <Sep />
        <Tool icon="floors" label="选择楼层" />
        <span className="flex-1" />
        <More />
      </div>
    </div>
  );
}

function EditToolbars() {
  return (
    <>
      <div className="flex h-[27px] shrink-0">
        <Bar className="pr-0.5">
          <Grip />
          <Tool icon="erase" label="删除" />
          <Sep />
          <Tool icon="copy" label="复制" />
          <Tool icon="mirror" label="镜像" />
          <Sep />
          <Tool icon="move" label="移动" />
          <Tool icon="rotate" label="旋转" />
          <Sep />
          <Tool icon="extend" label="延伸" />
          <Tool icon="trim" label="修剪" />
          <Sep />
          <Tool icon="breakLine" label="打断" />
          <Tool icon="merge" label="合并" />
          <Tool icon="split" label="分割" disabled />
          <Sep />
          <Tool icon="align" label="对齐" menu="near" />
          <Tool icon="offset" label="偏移" />
          <Tool icon="stretch" label="拉伸" />
          <Sep />
          <Tool icon="grip" label="设置夹点" disabled />
        </Bar>
      </div>
      <div className="flex h-[29px] pt-px shrink-0">
        <Bar className="w-[568px] mr-[73px]">
          <Grip />
          <div className="flex gap-[3px] ml-0.5">
            <Combo label="楼层" value="基础层" className="w-[57px]" />
            <Combo label="构件类别" value="自定义" className="w-[69px]" />
            <Combo label="构件类型" value="自定义线" className="w-[69px]" />
            <Combo label="构件" value="ZDYX-2" className="w-[69px]" />
          </div>
          <Sep />
          <Tool icon="property" label="属性" />
          <Tool icon="editBar" label="编辑钢筋" />
          <Tool icon="list" label="构件列表" />
          <Tool icon="picker" label="拾取构件" />
        </Bar>
        <Bar className="pr-1">
          <Grip />
          <Tool icon="twoPoint" label="两点" active />
          <Tool icon="parallel" label="平行" />
          <Tool icon="pointAngle" label="点角" menu="far" />
          <Tool icon="arcAxis" label="三点辅轴" menu="far" />
          <Tool icon="erase" label="删除辅轴" />
          <Tool icon="dimension" label="长度标注" menu="far" />
        </Bar>
      </div>
      <div className="flex justify-between h-[29px] pt-px shrink-0 pr-[3px]">
        <Bar className="pr-1">
          <Grip />
          <Tool icon="cursor" label="选择" menu="far" />
          <Sep />
          <Tool icon="line" label="直线" />
          <Tool icon="addLength" label="点加长度" />
          <Tool icon="arc" label="三点画弧" menu="far" />
          <Combo label="画法" value="" className="w-[55px] ml-0.5 mr-px" />
          <Tool icon="rect" label="矩形" />
          <Sep />
          <Tool icon="smart" label="智能布置" menu="near" />
        </Bar>
        <Bar className="w-[30px]">
          <Grip />
        </Bar>
      </div>
    </>
  );
}

function SnapToolbar() {
  return (
    <div className="flex h-8 shrink-0 pb-0.5">
      <Bar className="pr-[3px]">
        <Grip />
        <Tool icon="ortho" label="正交" />
        <Tool icon="snap" label="对象捕捉" active />
        <Tool icon="dynInput" label="动态输入" />
      </Bar>
      <Bar className="pl-0.5 pr-[3px]">
        <Grip />
        <Tool icon="cross" label="交点" />
        <Tool icon="perp" label="垂点" active />
        <Tool icon="middle" label="中点" active />
        <Tool icon="vertex" label="顶点" />
        <Tool icon="coord" label="坐标" />
      </Bar>
      <Bar className="pl-px pr-1 text-[#7d7d7d]">
        <Grip />
        <span className="text-black ml-0.5"><Combo label="偏移方式" value="不偏移" className="w-[57px]" /></span>
        <Sep />
        <label htmlFor="dx" className="px-[3px]">X=</label>
        <Spin id="dx" value="0" className="w-[58px]" />
        <span className="px-0.5">mm</span>
        <label htmlFor="dy" className="px-[3px]">Y=</label>
        <Spin id="dy" value="0" className="w-[58px]" />
        <span className="px-0.5">mm</span>
        <Sep />
        <input id="rot" type="checkbox" className="appearance-none w-3 h-3 border border-[#8a8a8a] bg-white" />
        <label htmlFor="rot" className="text-black pl-2 pr-1">旋转</label>
        <label htmlFor="angle" className="sr-only">旋转角度</label>
        <Spin id="angle" value="0.000" className="w-[68px]" />
        <span className="pl-0.5">°</span>
      </Bar>
    </div>
  );
}

function StatusBar() {
  const cell = "flex items-center h-5 px-px border border-[#d2d2d2] bg-linear-to-b from-white to-[#f0f0f0] whitespace-nowrap";
  return (
    <footer className="flex items-center gap-0.5 h-[21px] shrink-0 bg-[#f6f6f6] font-['Liberation_Serif','Noto_Sans_CJK_SC',serif]">
      <span className={`${cell} w-[148px]`}>X=12599 Y=-62</span>
      <span className={`${cell} w-[78px]`}>层高:1.5m</span>
      <span className={`${cell} w-[98px]`}>底标高:-1.55m</span>
      <span className={`${cell} w-12`}>0</span>
      <span className={`${cell} flex-1`}>按鼠标左键指定第一点，按右键中止或ESC取消</span>
      <span className={`${cell} w-[70px]`}>294.1 FPS</span>
    </footer>
  );
}

const edgePath = 'M3 13C4 5 9 2 13 2c6 0 9 4 9 9v3H9c0 4 6 6 12 3v4c-8 4-17 1-17-7 0-3 2-6 6-8-2 2-2 3-2 4h8c0-5-9-5-13 3z';

const taskIcons: { name: string; wide?: boolean; open?: boolean; active?: boolean; art: ReactNode }[] = [
  {
    name: '任务视图', wide: true,
    art: <path d="M6.500 5.500h11v13h-11zM4 7.500H2.500v9H4M20 7.500h1.500v9H20" fill="none" stroke="#fff" strokeWidth="1.300" />,
  },
  {
    name: '风扇', wide: true,
    art: (
      <g fill="#e6e6e6" stroke="#020b10" strokeWidth=".8">
        <path d="M12 12C9 10 8 5 11 1.500 5 0 1 3 1.500 7c.5 4 6 6 10.500 5z" />
        <path d="M12 12c2-3 7-4 10.500-1C24 5 21 1 17 1.500c-4 .5-6 6-5 10.500z" />
        <path d="M12 12c3 2 4 7 1 10.500 6 1.500 10-1.500 9.500-5.500-.5-4-6-6-10.500-5z" />
        <path d="M12 12c-2 3-7 4-10.500 1C0 19 3 23 7 22.500c4-.5 6-6 5-10.500z" />
      </g>
    ),
  },
  {
    name: '浏览器', wide: true,
    art: (
      <>
        <path d="M20 15a8 8 0 1 1 .5-4H8" fill="none" stroke="#e6e6e6" strokeWidth="3.300" />
        <path d="M2 21C0 15 14 2 22 3" fill="none" stroke="#e6e6e6" strokeWidth="1.500" />
      </>
    ),
  },
  {
    name: '广联达', wide: true,
    art: (
      <path d="M21 2c-2 3-5 1.500-9 2C6 4.500 3 8 3 12.500 3 18 7 21.500 12 21.500c5.500 0 8-4 8-7.500 0-4-3-6-6.500-6C10 8 8 10 8 12.500S10 17 12.500 17c2 0 3.500-1.500 3.500-3h-4M19 5c-2 1.500-4 1-7 1.500C8 7 5.500 9.500 5.500 13" fill="none" stroke="#ddd" strokeWidth="1.300" />
    ),
  },
  { name: 'Edge', art: <path d={edgePath} fill="#0a7be0" /> },
  {
    name: 'Internet Explorer',
    art: (
      <>
        <path d="M20 15.500a8 8 0 1 1 .5-4.500H8" fill="none" stroke="#3aa4ea" strokeWidth="3.600" />
        <path d="M3 22C-2 17 12 1 22 2c2 1 1 4 0 6" fill="none" stroke="#f3c22c" strokeWidth="1.900" />
      </>
    ),
  },
  {
    name: '文件资源管理器',
    art: (
      <>
        <path d="M2 3h8l2 2h10v15H2z" fill="#f7d774" />
        <path d="M2 8h20v12H2z" fill="#fce9a4" />
        <path d="M5 20v-7h14v7h-4v-4H9v4z" fill="#35a3dc" />
      </>
    ),
  },
  {
    name: '360浏览器', open: true,
    art: (
      <>
        <circle cx="12" cy="12" r="10.500" fill="#5fbf2a" stroke="#e6f6da" />
        <path d="M17.500 14.500a5.500 5.500 0 1 1 .3-3H8" fill="none" stroke="#fff" strokeWidth="2.400" />
        <path d="M2 18C6 19 19 11 21 5" fill="none" stroke="#fff" strokeWidth="1.300" />
      </>
    ),
  },
  {
    name: '图集', open: true,
    art: (
      <>
        <rect width="24" height="24" rx="2" fill="#f49a1c" />
        <path d="M4 6l12-2 3 15-13 1z" fill="#fff8e4" />
        <path d="M7 10l6-1M7 13l6-1M8 16l5-1" stroke="#8a5a20" />
        <path d="M22 2l-7 13-2 3 .500-4L20 1z" fill="#8c2c14" />
      </>
    ),
  },
  {
    name: 'GGJ2013', active: true, open: true,
    art: (
      <>
        <rect width="24" height="24" rx="4" fill="#0e8cf0" />
        <path d="M5 12h13.500M11.500 19c-4 0-6.500-2.500-6.500-7M11.500 19V7.500c0-3.500 4-3.500 5-.5M18.500 12c0 2.500-1.500 4-4 4" fill="none" stroke="#fff" strokeWidth="1.900" />
      </>
    ),
  },
  {
    name: 'G+工作台', open: true,
    art: (
      <path d="M24 2c-2 5-7 4-11 5-5 2-5 9 0 10 3 0 5-2 4-4h-4l2-4h7c2 8-3 14-10 14C-1 23-3 6 8 2c4-1 10 2 16 0z" fill="#22a2ec" />
    ),
  },
];

function Taskbar() {
  return (
    <div className="flex h-10 shrink-0 bg-[#020b10] text-white">
      <button type="button" aria-label="开始" className="w-12 bg-black flex items-center justify-center">
        <svg viewBox="0 0 16 16" className="w-4 h-4">
          <path d="M0 2.300l6.500-.9v6.100H0zM7.500 1.200L16 0v7.500H7.500zM0 8.500h6.500v6.100L0 13.700zM7.500 8.500H16V16l-8.500-1.200z" fill="#fff" />
        </svg>
      </button>
      <label className="w-[343px] bg-[#333] flex items-center pl-2 pr-3">
        <span className="w-[22px] h-[22px] rounded-full border-[3px] border-[#eee] shrink-0" />
        <input
          aria-label="搜索"
          placeholder="在这里输入你要搜索的内容"
          className="flex-1 min-w-0 pl-1.5 text-sm outline-none bg-transparent placeholder:text-[#9a9a9a]"
        />
        <Mic className="w-4 h-5 text-[#a5a5a5]" strokeWidth={1.5} />
      </label>
      {taskIcons.map((t) => (
        <button
          type="button"
          key={t.name}
          aria-label={t.name}
          className={`relative flex items-center justify-center shrink-0 ${t.wide ? 'w-[51px]' : 'w-[49px]'} ${t.active ? 'bg-[#323b40]' : ''}`}
        >
          <svg viewBox="0 0 24 24" className={t.wide ? 'w-[22px] h-[22px]' : 'w-6 h-6'}>{t.art}</svg>
          {t.open && <span className={`absolute bottom-0 h-0.5 bg-[#76b9ed] ${t.active ? 'inset-x-0' : 'inset-x-1'}`} />}
        </button>
      ))}
      <span className="flex-1" />
      <div className="flex items-center">
        <span className="pr-3">链接</span>
        <svg viewBox="0 0 14 14" className="w-3.5 h-3.5 mr-[9px]" aria-label="显示隐藏的图标">
          <path d="M1.500 10L7 4.500l5.500 5.500" fill="none" stroke="#fff" strokeWidth="1.300" />
        </svg>
        <svg viewBox="0 0 18 14" className="w-[18px] h-3.5 mr-[9px]" aria-label="电池">
          <path d="M6 4.500h10v7H5V9M17 6.500v3" fill="none" stroke="#fff" />
          <path d="M7 6h8v4H7z" fill="#fff" />
          <path d="M1.500 1v2M4.500 1v2M.5 3.500h5c0 4-5 4-5 0zM3 6v5h2" fill="none" stroke="#fff" />
        </svg>
        <svg viewBox="0 0 14 14" className="w-3.5 h-3.5 mr-2" aria-label="网络">
          <path d="M1 13A12 12 0 0 1 13 1M4 13a9 9 0 0 1 9-9M7 13a6 6 0 0 1 6-6" fill="none" stroke="#aaa" strokeWidth="1.300" />
          <path d="M9.500 13a3.500 3.500 0 0 1 3.500-3.500V13z" fill="#fff" />
        </svg>
        <svg viewBox="0 0 18 14" className="w-[18px] h-3.5 mr-2" aria-label="音量">
          <path d="M1 5h3l4-3.500v11L4 9H1zM10 5c1 1 1 3 0 4" fill="none" stroke="#fff" strokeWidth="1.200" />
          <path d="M12 3c2 2 2 6 0 8M14.500 1.500c3 3 3 8 0 11" fill="none" stroke="#999" />
        </svg>
        <KeyboardIcon className="w-[23px] h-3.5 mr-2.5" />
        <span className="mr-3.5">中</span>
        <SogouLogo className="w-[18px] h-[18px]" />
        <div className="w-[88px] text-center leading-[19px]">
          <div>20:41</div>
          <div>2018/7/9</div>
        </div>
        <button type="button" aria-label="通知" className="relative w-7 h-full flex justify-center items-center">
          <svg viewBox="0 0 28 28" className="w-7 h-7">
            <path d="M6 6h16v11H14l-3 3v-3H6z" fill="#fff" />
            <path d="M8.500 9h11M8.500 11.500h11M8.500 14h7" stroke="#000" />
            <circle cx="20.500" cy="20" r="7" fill="#333" stroke="#999" />
          </svg>
          <span className="absolute -right-px bottom-1 w-4 leading-5 text-center font-bold">1</span>
        </button>
        <span className="w-px h-full bg-[#555] ml-3.5 mr-1" />
      </div>
    </div>
  );
}

export default function App() {
  return (
    <div className="relative flex flex-col h-screen overflow-hidden bg-[#f0f0f0] text-black text-xs font-['Noto_Sans','Noto_Sans_CJK_SC',sans-serif]">
      <TitleBar />
      <MenuBar />
      <MainToolbar />
      <div className="flex flex-1 min-h-0">
        <NavPanel />
        <main className="flex-1 min-w-0 flex flex-col">
          <EditToolbars />
          <Drawing />
          <SnapToolbar />
        </main>
      </div>
      <StatusBar />
      <Taskbar />
      <ImeBar />
      {/* floating score badge */}
      <div className="absolute left-[972px] -top-[27px] w-[46px] h-[46px] rounded-full bg-[#35c04c] border-2 border-[#9a9a9a] ring-1 ring-[#e3e3e3] shadow flex items-end justify-center pb-0.5 text-white text-[13px] font-bold">
        66
      </div>
    </div>
  );
}
